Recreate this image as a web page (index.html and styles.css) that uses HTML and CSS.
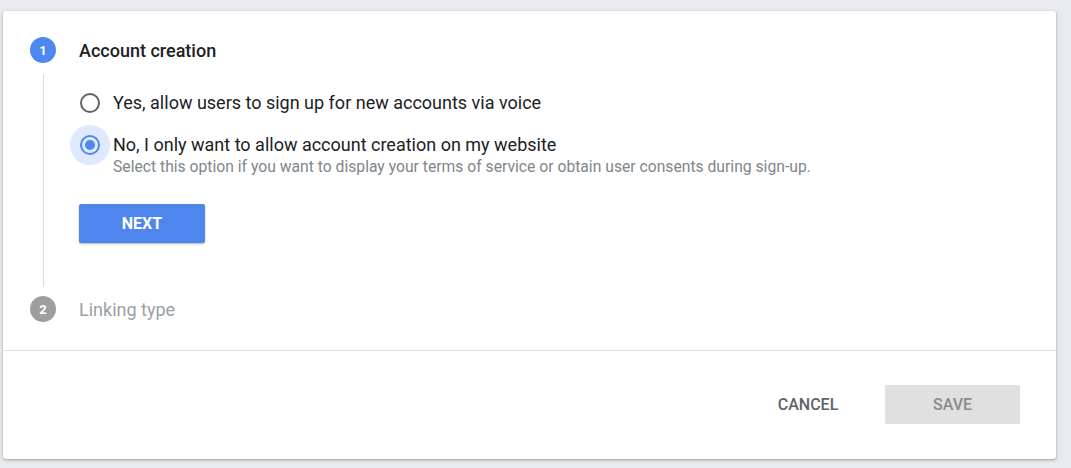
FILE: index.html
```html
<!DOCTYPE html>
<html>
<head>
<meta charset="utf-8">
<link rel="stylesheet" href="styles.css">
</head>
<body>
<div class="card">
  <div class="stepper">
    <div class="step active">
      <div class="step-head">
        <div class="step-num">1</div>
        <div class="step-title">Account creation</div>
      </div>
      <div class="step-body">
        <div class="rail"></div>
        <div class="step-content">
          <label class="option">
            <span class="radio"></span>
            <span class="opt-text"><span class="opt-label">Yes, allow users to sign up for new accounts via voice</span></span>
          </label>
          <label class="option">
            <span class="radio checked"></span>
            <span class="opt-text">
              <span class="opt-label">No, I only want to allow account creation on my website</span>
              <span class="opt-hint">Select this option if you want to display your terms of service or obtain user consents during sign-up.</span>
            </span>
          </label>
          <button class="btn-next">NEXT</button>
        </div>
      </div>
    </div>
    <div class="step inactive">
      <div class="step-head">
        <div class="step-num">2</div>
        <div class="step-title">Linking type</div>
      </div>
    </div>
  </div>
  <div class="footer">
    <button class="btn-cancel">CANCEL</button>
    <button class="btn-save">SAVE</button>
  </div>
</div>
</body>
</html>
```
FILE: styles.css
```css
* { box-sizing: border-box; }
html, body { margin: 0; padding: 0; }
body {
  background: #e8eaed;
  font-family: Roboto, "Liberation Sans", Arial, sans-serif;
  color: #202124;
  padding: 11px 15px 9px 3px;
}
.card {
  background: #fff;
  border-radius: 3px;
  box-shadow: 0 1px 2px rgba(60,64,67,0.3), 0 1px 3px 1px rgba(60,64,67,0.12);
  height: 448px;
  display: flex;
  flex-direction: column;
}
.stepper {
  padding: 25px 0 0 27px;
  height: 339px;
}
.step-head {
  display: flex;
  align-items: center;
  height: 28px;
}
.step-num {
  width: 26px;
  height: 26px;
  border-radius: 50%;
  background: #4c87f2;
  color: #fff;
  font-size: 13px;
  font-weight: 700;
  display: flex;
  align-items: center;
  justify-content: center;
}
.step-title {
  margin-left: 23px;
  font-size: 18px;
  font-weight: 500;
  color: #202124;
}
.step-body {
  display: flex;
  margin-top: 10px;
}
.rail {
  width: 1px;
  background: #dadce0;
  margin-left: 12.5px;
  height: 213px;
  flex: none;
}
.step-content {
  margin-left: 35.5px;
  display: flex;
  flex-direction: column;
  padding-top: 17px;
}
.option {
  display: flex;
  align-items: flex-start;
  margin-bottom: 18px;
}
.option:last-of-type { margin-bottom: 0; }
.radio {
  position: relative;
  width: 20px;
  height: 20px;
  border: 2px solid #5f6368;
  border-radius: 50%;
  margin: 2px 13px 0 1px;
  flex: none;
}
.radio.checked {
  border-color: #4c87f2;
}
.radio.checked::before {
  content: "";
  position: absolute;
  left: -12px;
  top: -12px;
  width: 40px;
  height: 40px;
  border-radius: 50%;
  background: rgba(76,135,242,0.18);
}
.radio.checked::after {
  content: "";
  position: absolute;
  left: 3px;
  top: 3px;
  width: 10px;
  height: 10px;
  border-radius: 50%;
  background: #4c87f2;
}
.opt-text {
  display: flex;
  flex-direction: column;
}
.opt-label {
  font-size: 18px;
  line-height: 24px;
  color: #202124;
}
.opt-hint {
  font-size: 15.7px;
  line-height: 20px;
  color: #80868b;
}
.btn-next {
  margin-top: 27px;
  width: 126px;
  height: 39px;
  border: none;
  border-radius: 2px;
  background: #4f86ed;
  color: #fff;
  font-family: inherit;
  font-size: 16px;
  font-weight: 700;
  box-shadow: 0 1px 2px rgba(0,0,0,0.3);
  align-self: flex-start;
}
.step.inactive { margin-top: 8px; }
.inactive .step-num { background: #9e9e9e; }
.inactive .step-title { color: #9aa0a6; font-weight: 400; font-size: 18px; }
.footer {
  border-top: 1px solid #e0e0e0;
  flex: 1;
  display: flex;
  justify-content: flex-end;
  align-items: flex-start;
  padding: 34px 36px 0 0;
}
.btn-cancel, .btn-save {
  font-family: inherit;
  font-size: 16px;
  font-weight: 500;
  border: none;
  height: 39px;
  border-radius: 2px;
}
.btn-cancel {
  background: transparent;
  color: #5f6368;
  width: 96px;
  margin-right: 29px;
}
.btn-save {
  background: #e0e0e0;
  color: #8a8a8a;
  width: 135px;
}
```
